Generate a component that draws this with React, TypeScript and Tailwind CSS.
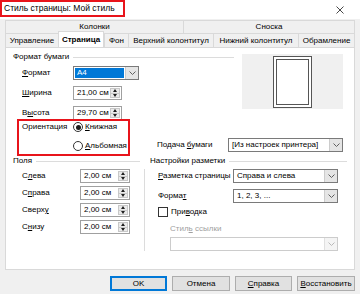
import React from "react";

const U = ({ children }: { children: React.ReactNode }) => <span className="underline underline-offset-[1px]">{children}</span>;

function Chevron() {
  return (
    <div className="w-[13px] h-full bg-[#e5e5e5] border-l border-[#cccccc] flex items-center justify-center">
      <svg width="7" height="4" viewBox="0 0 7 4">
        <path d="M0.5 0.5 L3.5 3.5 L6.5 0.5" fill="none" stroke="#606060" strokeWidth="1" />
      </svg>
    </div>
  );
}

function Select({ value, w, active, disabled }: { value: string; w: string; active?: boolean; disabled?: boolean }) {
  return (
    <div className={`${w} h-[14px] flex bg-white border ${disabled ? "border-[#cccccc]" : "border-[#7a7a7a]"}`}>
      <div className="flex-1 p-[1px] flex">
        <div className={`flex-1 flex items-center pl-[2px] ${active ? "bg-[#0078d7] text-white" : ""}`}>{value}</div>
      </div>
      {disabled ? (
        <div className="w-[13px] h-full bg-[#f4f4f4] border-l border-[#e0e0e0] flex items-center justify-center">
          <svg width="7" height="4" viewBox="0 0 7 4">
            <path d="M0.5 0.5 L3.5 3.5 L6.5 0.5" fill="none" stroke="#b8b8b8" strokeWidth="1" />
          </svg>
        </div>
      ) : (
        <Chevron />
      )}
    </div>
  );
}

function Spin({ value, w }: { value: string; w: string }) {
  return (
    <div className={`${w} h-[14px] flex bg-white border border-[#a0a0a0]`}>
      <div className="flex-1 flex items-center pl-[3px]">{value}</div>
      <div className="w-[10px] my-[1px] mr-[1px] bg-[#eaeaea] border border-[#c8c8c8] flex flex-col">
        <div className="flex-1 flex items-center justify-center border-b border-[#c8c8c8]">
          <svg width="4" height="3" viewBox="0 0 4 3"><path d="M0 3 L2 0 L4 3 Z" fill="#202020" /></svg>
        </div>
        <div className="flex-1 flex items-center justify-center">
          <svg width="4" height="3" viewBox="0 0 4 3"><path d="M0 0 L2 3 L4 0 Z" fill="#202020" /></svg>
        </div>
      </div>
    </div>
  );
}

function Header({ title }: { title: string }) {
  return (
    <div className="h-[10px] flex items-center">
      <span>{title}</span>
      <div className="flex-1 h-px bg-[#dcdcdc] ml-[4px]" />
    </div>
  );
}

function Radio({ checked }: { checked?: boolean }) {
  return (
    <div className="w-[10px] h-[10px] shrink-0 rounded-full border border-[#333333] bg-white flex items-center justify-center">
      {checked && <div className="w-[5px] h-[5px] rounded-full bg-[#1a1a1a]" />}
    </div>
  );
}

export default function App() {
  const tabs = [
    { label: "Управление", w: "w-[53px]" },
    { label: "Страница", w: "w-[46px]", active: true },
    { label: "Фон", w: "w-[24px]" },
    { label: "Верхний колонтитул", w: "w-[85px]" },
    { label: "Нижний колонтитул", w: "w-[85px]" },
    { label: "Обрамление", w: "w-[57px]" },
  ];

  const margins = [
    { l: <>С<U>л</U>ева</> },
    { l: <>С<U>п</U>рава</> },
    { l: <>Сверх<U>у</U></> },
    { l: <>С<U>н</U>изу</> },
  ];

  return (
    <div className="w-[360px] h-[294px] bg-[#f0f0f0] overflow-hidden text-[8px] leading-none text-black whitespace-nowrap" style={{ fontFamily: '"Liberation Sans", Arial, sans-serif' }}>
      {/* title bar */}
      <div className="h-[19px] bg-white flex items-start justify-between">
        <div className="w-[125px] h-[17px] border-2 border-[#e8141b] flex items-center pl-[2px] text-[8.5px]">
          Стиль страницы: Мой стиль
        </div>
        <div className="w-[20px] h-[19px] flex items-center justify-center mr-[10px]">
          <svg width="8" height="8" viewBox="0 0 8 8">
            <path d="M0.5 0.5 L7.5 7.5 M7.5 0.5 L0.5 7.5" stroke="#333" strokeWidth="0.9" />
          </svg>
        </div>
      </div>

      {/* tabs */}
      <div className="px-[5px] pt-[1px]">
        <div className="flex h-[13px]">
          <div className="w-[178px] border-t border-l border-[#d9d9d9] flex items-center justify-center">Колонки</div>
          <div className="flex-1 border-t border-l border-r border-[#d9d9d9] flex items-center justify-center">Сноска</div>
        </div>
        <div className="flex h-[14px] items-end">
          {tabs.map((t) =>
            t.active ? (
              <div key={t.label} className={`${t.w} h-[16px] -mt-[2px] bg-white border-t border-x border-[#d9d9d9] flex items-center justify-center font-bold relative z-10`}>
                {t.label}
              </div>
            ) : (
              <div key={t.label} className={`${t.w} h-[14px] border-t border-l last:border-r border-[#d9d9d9] flex items-center justify-center`}>
                {t.label}
              </div>
            )
          )}
        </div>
      </div>

      {/* panel */}
      <div className="mx-[5px] h-[223px] bg-white border border-[#d9d9d9] pl-[7px] pt-[3px]">
        <div className="flex">
          <div className="w-[221px]">
            <div className="h-[12px] flex items-center">
              <span>Формат бумаги</span>
              <div className="flex-1 h-px bg-[#dcdcdc] ml-[4px]" />
            </div>
            <div className="mt-[3px] h-[14px] flex items-center">
              <div className="w-[60px] pl-[9px]"><U>Ф</U>ормат</div>
              <Select value="A4" w="w-[66px]" active />
            </div>
            <div className="mt-[6px] h-[14px] flex items-center">
              <div className="w-[60px] pl-[9px]"><U>Ш</U>ирина</div>
              <Spin value="21,00 см" w="w-[49px]" />
            </div>
            <div className="mt-[6px] h-[14px] flex items-center">
              <div className="w-[60px] pl-[9px]">В<U>ы</U>сота</div>
              <Spin value="29,70 см" w="w-[49px]" />
            </div>
          </div>
          <div className="ml-[8px] mt-[3px] w-[101px] h-[55px] bg-[#f0f0f0] flex justify-center">
            <div className="mt-[2px] w-[39px] h-[52px] border border-[#555555] bg-white p-[2px]">
              <div className="w-full h-full border border-[#555555]" />
            </div>
          </div>
        </div>

        {/* orientation */}
        <div className="flex items-start -mt-[1px]">
          <div className="ml-[4px] w-[113px] h-[37px] border-2 border-[#e8141b] flex pl-[3px]">
            <div className="w-[51px] h-[12px] flex items-center">Ориентация</div>
            <div className="flex flex-col">
              <div className="h-[12px] flex items-center gap-[2px]">
                <Radio checked />
                <span><U>К</U>нижная</span>
              </div>
              <div className="h-[12px] mt-[7px] flex items-center gap-[2px]">
                <Radio />
                <span><U>А</U>льбомная</span>
              </div>
            </div>
          </div>
          <div className="ml-[27px] mt-[19px] h-[14px] flex items-center">
            <div className="w-[71px]">Подача <U>б</U>умаги</div>
            <Select value="[Из настроек принтера]" w="w-[115px]" />
          </div>
        </div>

        {/* margins + layout */}
        <div className="flex">
          <div className="w-[127px]">
            <Header title="Поля" />
            {margins.map((m, i) => (
              <div key={i} className="mt-[3px] mb-[3px] h-[14px] flex items-center">
                <div className="w-[67px] pl-[9px]">{m.l}</div>
                <Spin value="2,00 см" w="w-[50px]" />
              </div>
            ))}
          </div>
          <div className="w-[10px]">
            <div className="ml-[4px] mt-[13px] w-px h-[82px] bg-[#dcdcdc]" />
          </div>
          <div className="w-[197px]">
            <Header title="Настройки разметки" />
            <div className="mt-[3px] h-[14px] flex items-center">
              <div className="w-[83px] pl-[8px]"><U>Р</U>азметка страницы</div>
              <Select value="Справа и слева" w="w-[105px]" />
            </div>
            <div className="mt-[6px] h-[14px] flex items-center">
              <div className="w-[83px] pl-[8px]">Форма<U>т</U></div>
              <Select value="1, 2, 3, ..." w="w-[105px]" />
            </div>
            <div className="mt-[3px] h-[12px] flex items-center pl-[8px] gap-[3px]">
              <div className="w-[10px] h-[10px] border border-[#333333] bg-white" />
              <span>При<U>в</U>одка</span>
            </div>
            <div className="mt-[6px] h-[10px] flex items-center pl-[20px] text-[#a0a0a0]"><span>Стил<U>ь</U> ссылки</span></div>
            <div className="mt-[3px] ml-[20px]">
              <Select value="" w="w-[168px]" disabled />
            </div>
          </div>
        </div>
      </div>

      {/* buttons */}
      <div className="mt-[6px] flex justify-end pr-[5px] gap-[5px]">
        <button className="w-[57px] h-[15px] bg-[#e1e1e1] border-2 border-[#0078d7] flex items-center justify-center">OK</button>
        <button className="w-[58px] h-[15px] bg-[#e1e1e1] border border-[#adadad] flex items-center justify-center">Отмена</button>
        <button className="w-[57px] h-[15px] bg-[#e1e1e1] border border-[#adadad] flex items-center justify-center"><span><U>С</U>правка</span></button>
        <button className="w-[58px] h-[15px] bg-[#e1e1e1] border border-[#adadad] flex items-center justify-center"><span><U>В</U>осстановить</span></button>
      </div>
    </div>
  );
}
